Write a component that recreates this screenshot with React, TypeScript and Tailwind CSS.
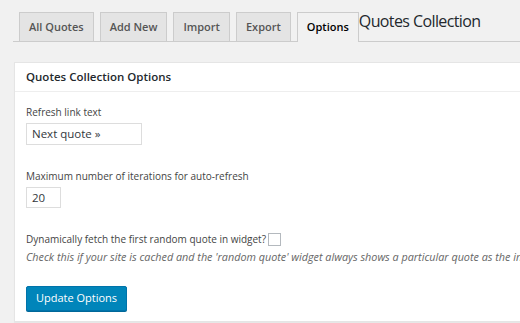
export default function App() {
  const font = { fontFamily: '"Open Sans", "Liberation Sans", sans-serif' };
  const tab = "h-[29px] px-[9px] flex items-center bg-[#e4e4e4] border border-b-0 border-[#ccc] text-[11px] font-semibold text-[#555]";
  return (
    <div className="w-[520px] h-[323px] overflow-hidden bg-[#f1f1f1] text-[#444]" style={font}>
      {/* Tabs + title */}
      <div className="ml-[13px] pt-[12px] flex items-end border-b border-[#ccc] w-[600px]">
        <div className="flex items-end gap-[6px] pl-[6px]">
          <span className={tab}>All Quotes</span>
          <span className={tab}>Add New</span>
          <span className={tab}>Import</span>
          <span className={tab}>Export</span>
          <span className="h-[30px] px-[9px] flex items-center bg-[#f1f1f1] border border-b-0 border-[#ccc] text-[11px] font-semibold text-black -mb-px">Options</span>
        </div>
        <span className="self-start text-[16px] font-medium tracking-[-0.6px] text-[#23282d] leading-none mt-[1px]">Quotes Collection</span>
      </div>

      {/* Options panel */}
      <div className="ml-[14px] mt-[20px] w-[560px] bg-white border border-[#e5e5e5] shadow-[0_1px_1px_rgba(0,0,0,0.04)]">
        <div className="h-[29px] px-[11px] flex items-center border-b border-[#eee] text-[11.5px] font-semibold text-[#23282d]">
          Quotes Collection Options
        </div>
        <div className="px-[11px] pt-[13px] pb-[10px] text-[10px] text-[#444]">
          <div className="leading-[14px]">Refresh link text</div>
          <div className="mt-[4px] w-[116px] h-[22px] border border-[#ddd] px-[5px] flex items-center text-[11.5px] text-[#32373c]">Next quote »</div>

          <div className="mt-[24px] leading-[14px]">Maximum number of iterations for auto-refresh</div>
          <div className="mt-[4px] w-[35px] h-[21px] border border-[#ddd] px-[5px] flex items-center text-[11.5px] text-[#32373c]">20</div>

          <div className="mt-[24px] flex items-center leading-[14px]">
            Dynamically fetch the first random quote in widget?
            <span className="ml-[2px] w-[13px] h-[13px] border border-[#b4b9be] bg-white inline-block"></span>
          </div>
          <div className="mt-[3px] italic text-[10.8px] text-[#666] leading-[15px] whitespace-nowrap">
            Check this if your site is cached and the 'random quote' widget always shows a particular quote as the initial quote.
          </div>

          <button className="mt-[22px] w-[101px] h-[25px] bg-[#0085ba] border border-[#0073aa] shadow-[0_1px_0_#006799] rounded-[2px] text-white text-[11px] flex items-center justify-center">
            Update Options
          </button>
        </div>
      </div>
    </div>
  );
}
